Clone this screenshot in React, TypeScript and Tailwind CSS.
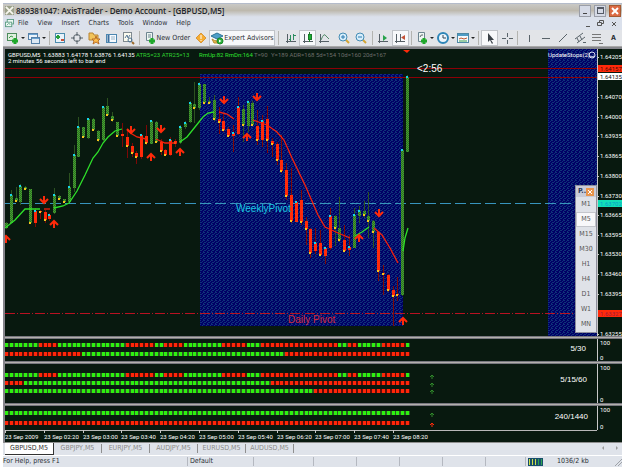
import React from "react";

type Candle = [high: number, low: number, top: number, bottom: number, color: "g" | "r", mark: "c" | "y" | "n"];

const CANDLES: Candle[] = [
  [222, 229, 223, 228, "g", "n"], [190, 223, 195, 223, "g", "c"], [187, 202, 198, 201, "g", "y"],
  [184, 205, 186, 202, "g", "c"], [186, 190, 187, 189, "g", "y"], [189, 224, 189, 223, "g", "y"],
  [208, 227, 211, 223, "r", "c"], [210, 219, 211, 212, "r", "y"], [210, 223, 212, 220, "r", "y"],
  [213, 221, 215, 219, "r", "c"], [188, 214, 195, 213, "g", "c"], [195, 200, 196, 199, "g", "y"],
  [199, 202, 199, 202, "g", "y"], [173, 203, 187, 202, "g", "c"], [145, 192, 155, 188, "g", "c"],
  [117, 157, 127, 157, "g", "c"], [127, 138, 127, 137, "g", "y"], [118, 139, 119, 138, "g", "c"],
  [118, 131, 119, 130, "g", "y"], [130, 142, 131, 140, "g", "y"], [106, 141, 107, 140, "g", "c"],
  [98, 116, 106, 115, "g", "y"], [112, 122, 116, 120, "g", "y"], [122, 137, 122, 136, "g", "y"],
  [123, 147, 134, 136, "r", "n"], [130, 158, 137, 146, "r", "y"], [143, 157, 146, 153, "r", "y"],
  [151, 164, 153, 157, "r", "y"], [134, 159, 135, 157, "r", "c"], [125, 145, 136, 143, "r", "y"],
  [120, 144, 121, 144, "g", "c"], [121, 143, 122, 142, "g", "y"], [139, 155, 142, 151, "r", "y"],
  [149, 156, 150, 155, "r", "y"], [137, 156, 140, 155, "r", "c"], [139, 147, 141, 143, "r", "y"],
  [125, 144, 127, 143, "g", "c"], [121, 129, 123, 127, "g", "c"], [101, 123, 103, 122, "g", "c"],
  [82, 123, 104, 108, "g", "y"], [82, 110, 84, 108, "g", "c"], [84, 104, 84, 103, "g", "y"],
  [97, 104, 101, 103, "g", "y"], [95, 121, 100, 119, "g", "y"], [107, 134, 119, 122, "r", "y"],
  [114, 132, 121, 130, "r", "y"], [127, 137, 129, 136, "r", "y"], [125, 152, 133, 136, "r", "c"],
  [97, 135, 107, 134, "r", "c"], [105, 142, 109, 125, "g", "y"], [100, 132, 102, 126, "g", "c"],
  [101, 126, 103, 125, "g", "y"], [110, 145, 126, 140, "r", "y"], [115, 147, 121, 140, "r", "c"],
  [106, 153, 119, 140, "r", "y"], [138, 157, 141, 144, "r", "y"], [142, 165, 144, 160, "r", "y"],
  [135, 173, 160, 171, "r", "y"], [163, 200, 170, 196, "r", "y"], [168, 223, 195, 221, "r", "y"],
  [200, 222, 202, 222, "r", "c"], [190, 225, 200, 222, "r", "y"], [217, 245, 221, 229, "r", "y"],
  [228, 258, 229, 253, "r", "y"], [228, 254, 243, 251, "r", "c"], [230, 256, 243, 255, "r", "y"],
  [246, 264, 248, 256, "r", "c"], [208, 250, 216, 248, "r", "c"], [215, 246, 216, 228, "g", "y"],
  [197, 242, 228, 240, "g", "y"], [225, 252, 240, 251, "r", "y"], [235, 256, 247, 250, "r", "c"],
  [208, 248, 215, 248, "g", "c"], [206, 223, 211, 216, "g", "c"], [201, 218, 211, 215, "g", "y"],
  [192, 238, 216, 221, "g", "y"], [220, 248, 221, 232, "g", "y"], [231, 281, 232, 271, "r", "y"],
  [265, 295, 273, 274, "r", "y"], [274, 292, 275, 290, "r", "y"], [286, 326, 290, 296, "r", "y"],
  [277, 301, 294, 295, "r", "y"], [149, 296, 150, 295, "g", "c"], [75, 152, 77, 152, "g", "c"],
];

const barX = (i: number) => Math.round(6 + (i * 401) / 83);

const GREEN_MA = [
  "5,228 15,220 25,209 40,209",
  "54,208 63,206 69,203 77,191 85,175 93,158 98,152 103,143 108,137 115,131 122,129",
  "180,142 187,137 195,127 203,117 208,113 214,112",
  "355,236 362,232 369,227",
  "403,251 405,238 408,228",
];
const RED_MA = [
  "44,209 50,209",
  "127,130 132,134 137,137 146,139",
  "156,139 165,143 177,143",
  "219,112 227,114 234,119",
  "253,120 267,125 277,132 284,140 292,158 305,185 318,215 325,227 338,233 350,238",
  "374,228 382,235 390,248 398,263",
];

const ARROWS: [number, number, "up" | "down"][] = [
  [44, 200, "down"], [131, 130, "down"], [161, 129, "down"], [151, 157, "up"], [180, 152, "up"],
  [54, 224, "up"], [6, 239, "up"], [224, 100, "down"], [257, 97, "down"], [247, 137, "up"],
  [379, 213, "down"], [359, 238, "up"], [403, 321, "up"],
];

const PRICES: [string, number][] = [
  ["1.64205", 57], ["1.64070", 97], ["1.64000", 117], ["1.63935", 136], ["1.63865", 156], ["1.63800", 176],
  ["1.63730", 196], ["1.63665", 215], ["1.63595", 235], ["1.63530", 254], ["1.63460", 274], ["1.63395", 294],
  ["1.63255", 334],
];

const SMALL = "font-['Roboto',sans-serif] text-[6px]";
const UI = "font-['DejaVu_Sans_Condensed','DejaVu_Sans',sans-serif]";
const ARIAL = "font-['Liberation_Sans',Arial,sans-serif]";

function Arrow({ x, y, dir }: { x: number; y: number; dir: "up" | "down" }) {
  const d = dir === "up" ? "M0 4V-3M-4 1L0 -3L4 1" : "M0 -4V3M-4 -1L0 3L4 -1";
  return <path d={d} transform={`translate(${x} ${y})`} stroke="#ff2a0a" strokeWidth="2" fill="none" />;
}

function PriceChart() {
  return (
    <svg viewBox="5 49 617 287" className="block w-full" role="img" aria-label="GBPUSD five minute chart">
      <defs>
        <pattern id="session" width="4" height="4" patternUnits="userSpaceOnUse" shapeRendering="crispEdges">
          <rect width="4" height="4" fill="#000066" />
          <path d="M0 0h1v1h-1zM2 1h1v1h-1zM1 2h1v1h-1zM3 3h1v1h-1zM3 0h1v1h-1zM0 2h1v1h-1z" fill="#10337a" />
        </pattern>
        <pattern id="bull" width="2" height="2" patternUnits="userSpaceOnUse" shapeRendering="crispEdges">
          <rect width="2" height="2" fill="#257425" />
          <path d="M0 0h1v1h-1zM1 1h1v1h-1z" fill="#4d9a2e" />
        </pattern>
      </defs>
      <rect x="5" y="49" width="617" height="287" fill="#08190f" />
      <rect x="200" y="74" width="203" height="252" fill="url(#session)" />
      <rect x="548" y="49" width="49" height="287" fill="url(#session)" />
      <path d="M5 68.500H597M5 77.500H597" stroke="#8c0006" />
      <path d="M5 203.500H597" stroke="#3794bd" strokeDasharray="11 4" />
      <path d="M5 313.500H597" stroke="#b81222" strokeDasharray="10 2 1 2" />
      <g shapeRendering="crispEdges">
        {CANDLES.map(([high, low, top, bottom, color, mark], i) => (
          <g key={i}>
            <rect x={barX(i)} y={high} width="1" height={low - high} fill={color === "g" ? "#2c5220" : "#7d0806"} />
            <rect x={barX(i) - 1} y={top} width="3" height={bottom - top} fill={color === "g" ? "url(#bull)" : "#ff2a0a"} />
            {mark !== "n" && (
              <rect x={barX(i) - 1} y={mark === "c" ? top - 1 : bottom - 1} width="2" height="2" fill={mark === "c" ? "#18d6e8" : "#f5c51c"} />
            )}
          </g>
        ))}
      </g>
      {GREEN_MA.map((p) => <polyline key={p} points={p} fill="none" stroke="#2ee02a" strokeWidth="1.300" />)}
      {RED_MA.map((p) => <polyline key={p} points={p} fill="none" stroke="#f5200c" strokeWidth="1.300" />)}
      {ARROWS.map(([x, y, dir]) => <Arrow key={`${x}-${y}`} x={x} y={y} dir={dir} />)}
      <path d="M403 50h7l-3 3z" fill="#ff2a0a" />

      <g className={SMALL}>
        <text x="8" y="57" fill="#ffffff">GBPUSD,M5</text>
        <text x="43" y="57" fill="#ffffff">1.63883 1.64178 1.63876 1.64135</text>
        <text x="136" y="57" fill="#2fd02f">ATR5=23 ATR25=13</text>
        <text x="199" y="57" fill="#2fe02f">RmUp:82</text>
        <text x="225" y="57" fill="#2fe02f">RmDn:164</text>
        <text x="254" y="57" fill="#6e6e6a">T=90</text>
        <text x="271" y="57" fill="#6e6e6a">Y=189 ADR=168 5d=154 10d=160 20d=167</text>
        <text x="8" y="63" fill="#ffffff">2 minutes 56 seconds left to bar end</text>
        <text x="548" y="57" fill="#ffffff">UpdateStops(2)</text>
      </g>
      <circle cx="592" cy="55" r="3" fill="none" stroke="#d8dcf0" />
      <path d="M590 56q2 2 4 0" fill="none" stroke="#d8dcf0" />
      <g className={`${ARIAL} text-[10px]`}>
        <text x="417" y="72" fill="#ffffff">&lt;2:56</text>
        <text x="236" y="212" fill="#19c8e4">WeeklyPivot</text>
        <text x="288" y="323" fill="#d42a3c">Daily Pivot</text>
      </g>

      <rect x="597" y="49" width="1" height="287" fill="#c8c8c8" />
      <g className={SMALL}>
        {PRICES.map(([p, y]) => (
          <g key={p}>
            <rect x="598" y={y} width="1" height="1" fill="#c8c8c8" />
            <text x="600" y={y + 2} fill="#ffffff">{p}</text>
          </g>
        ))}
        <rect x="598" y="65" width="24" height="7" fill="#ff2a0a" />
        <text x="600" y="71" fill="#4a0a08">1.64157</text>
        <rect x="598" y="73" width="24" height="7" fill="#ffffff" />
        <text x="600" y="79" fill="#111111">1.64135</text>
        <rect x="598" y="200" width="24" height="7" fill="#12e0b8" />
        <text x="600" y="206" fill="#0a9cc8">1.63702</text>
        <rect x="598" y="310" width="24" height="7" fill="#ff2a0a" />
        <text x="600" y="316" fill="#a01a3c">1.63327</text>
      </g>
    </svg>
  );
}

type Run = ["g" | "r", number];
const FAST: Run[] = [
  ["g", 7], ["r", 4], ["g", 14], ["r", 6], ["g", 2], ["r", 4], ["g", 8], ["r", 5], ["g", 3],
  ["r", 16], ["g", 2], ["r", 2], ["g", 5], ["r", 5], ["g", 1],
];

function Dots({ runs, y }: { runs: Run[]; y: number }) {
  const colors = runs.flatMap(([c, n]) => Array<"g" | "r">(n).fill(c));
  return (
    <g shapeRendering="crispEdges">
      {colors.map((c, i) => (
        <g key={i}>
          <rect x={barX(i) - 1} y={y} width={i === colors.length - 1 ? 4 : 5} height="4" fill={c === "g" ? "#2c5a22" : "#5c0c08"} />
          <rect x={barX(i) - 1} y={y} width="3" height="4" fill={c === "g" ? "#2df010" : "#ff2608"} />
        </g>
      ))}
    </g>
  );
}

function Pane({ height, label, labelX, labelY, rows, arrows }: {
  height: number; label: string; labelX: number; labelY: number;
  rows: [Run[], number][]; arrows: [number, string][];
}) {
  return (
    <svg viewBox={`5 0 617 ${height}`} className="block w-full" role="img" aria-label={`Trend ${label}`}>
      <rect x="5" width="617" height={height} fill="#08190f" />
      {rows.map(([runs, y]) => <Dots key={y} runs={runs} y={y} />)}
      {arrows.map(([y, color]) => (
        <path key={y} d={`M432 ${y + 2}v-4M430 ${y}l2 -2l2 2`} stroke={color} fill="none" />
      ))}
      <text x={labelX} y={labelY} textAnchor="end" fill="#ffffff" className={`${ARIAL} text-[8px]`}>{label}</text>
      <rect x="597" width="1" height={height} fill="#c8c8c8" />
      <g className={SMALL} fill="#ffffff">
        <text x="600" y="6">100</text>
        <text x="600" y={height - 1}>0</text>
      </g>
    </svg>
  );
}

const TIMES = ["23 Sep 2009", "23 Sep 02:20", "23 Sep 03:00", "23 Sep 03:40", "23 Sep 04:20", "23 Sep 05:00", "23 Sep 05:40", "23 Sep 06:20", "23 Sep 07:00", "23 Sep 07:40", "23 Sep 08:20"];

function TimeAxis() {
  return (
    <svg viewBox="5 0 617 12" className="block w-full" role="img" aria-label="Time axis">
      <path d="M5 .5H597" stroke="#b8b8b8" />
      {TIMES.map((t, i) => {
        const x = 5 + Math.round((i * 388) / 10);
        return (
          <g key={t}>
            <rect x={x} y="0" width="1" height="3" fill="#c8c8c8" />
            <text x={x} y="9" fill="#ffffff" className={SMALL}>{t}</text>
          </g>
        );
      })}
    </svg>
  );
}

function Divider() {
  return <div className="h-[3px] border-y border-[#77777f] bg-[#b2b0ac]" />;
}

function Ico({ children }: { children: React.ReactNode }) {
  return <svg viewBox="0 0 14 14" className="size-[14px] shrink-0" fill="none" stroke="#59636a" aria-hidden="true">{children}</svg>;
}

const plus = <path d="M9 7v6M6 10h6" stroke="#1fa82b" strokeWidth="3" />;
const axes = <path d="M3.500 3v9M2 10.500h10" stroke="#555f66" />;
const glyphs: Record<string, React.ReactNode> = {
  newChart: <><rect x="1.500" y="2.500" width="9" height="7" fill="#dff0df" stroke="#4d8c5c" /><path d="M3 7l2-2 2 1" stroke="#3c9a48" />{plus}</>,
  profiles: <><rect x="1.500" y="2.500" width="9" height="6" fill="#eaf3fa" stroke="#5580a8" /><path d="M2 3.500h8" stroke="#69a1cf" /><rect x="4.500" y="6.500" width="8" height="6" fill="#dce8f4" stroke="#5580a8" /><path d="M5 7.500h7" stroke="#69a1cf" /></>,
  watch: <><rect x="2.500" y="2.500" width="9" height="9" fill="#e8f2fa" stroke="#4b8cae" /><path d="M5 4v4M3 6h4" stroke="#28a03c" strokeWidth="2" /><path d="M8 9h3" stroke="#cc5034" strokeWidth="2" /></>,
  target: <><circle cx="7" cy="7" r="3.500" /><path d="M7 1v4M7 9v4M1 7h4M9 7h4" /></>,
  navigator: <><path d="M2 2h4l1 2h4v5h-9z" fill="#f2c45a" stroke="#b98432" /><path d="M9 5l1 3h3l-2 2 1 3-3-2-3 2 1-3-2-2h3z" fill="#ffbd4a" stroke="#ba702a" /></>,
  terminal: <><rect x="2.500" y="3.500" width="10" height="8" fill="#f7fbff" stroke="#4d87b0" /><path d="M4.500 4v7" stroke="#3d6f9c" strokeWidth="2" /><path d="M7 6h4M7 8h4" stroke="#9bb5c8" /></>,
  tester: <><rect x="2.500" y="1.500" width="8" height="9" fill="#fbfbef" stroke="#808a90" /><path d="M4 7l2-3 1 3 2-3" stroke="#5a7a9a" /><circle cx="9" cy="9" r="2" stroke="#4b7192" /><path d="M11 11l2 2" stroke="#9c6b2c" strokeWidth="2" /></>,
  order: <><path d="M3.500 1.500h6v8h-6z" fill="#eef6f2" stroke="#6d8590" /><path d="M5 4h3M5 6h3" stroke="#6d8590" />{plus}</>,
  warn: <><path d="M7 2l5 5-5 5-5-5z" fill="#f6ad32" stroke="#d9963a" /><path d="M7 4v4M7 9v1" stroke="#fff" /></>,
  advisor: <><path d="M2 8q5 4 10 0l-1 4H4z" fill="#e8b848" stroke="#b48a30" /><path d="M1 5l6-3 6 3-6 3z" fill="#4f9fc8" stroke="#2e7396" /><circle cx="10" cy="10" r="3" fill="#29ae38" stroke="#1c8a2a" /><path d="M9 8.500l2.500 1.500-2.500 1.500z" fill="#fff" stroke="none" /></>,
  bars: <>{axes}<path d="M6.500 4v6M9.500 3v6M5 8.500h1M10 4.500h2" stroke="#2d8c5d" /></>,
  candles: <>{axes}<path d="M8.500 1v10" stroke="#287a30" /><rect x="7.500" y="3.500" width="3" height="5" fill="#1cad31" stroke="#167a28" /></>,
  line: <>{axes}<path d="M4 9q3-8 5-4l3 3" stroke="#548b69" /></>,
  zoomIn: <><path d="M8 8l4 4" stroke="#d3a535" strokeWidth="2" /><circle cx="6" cy="6" r="4" fill="#d7eefb" stroke="#458cb4" /><path d="M4 6h4M6 4v4" stroke="#2d7ab0" /></>,
  zoomOut: <><path d="M8 8l4 4" stroke="#d3a535" strokeWidth="2" /><circle cx="6" cy="6" r="4" fill="#d7eefb" stroke="#458cb4" /><path d="M4 6h4" stroke="#2d7ab0" /></>,
  scroll: <>{axes}<path d="M7 4l4 3-4 3z" fill="#29a34a" stroke="none" /></>,
  shift: <>{axes}<path d="M7.500 3v7" /><path d="M12 4v5L8 6.500z" fill="#c45135" stroke="none" /></>,
  indicators: <><path d="M3.500 1.500h6v9h-6z" fill="#eef6f2" stroke="#6d8590" /><path d="M5 6q1-3 3-2" stroke="#59636a" />{plus}</>,
  periods: <><circle cx="7" cy="7" r="5" fill="#eef7fd" stroke="#2e86b8" strokeWidth="2" /><path d="M7 4v3h3" stroke="#345" /></>,
  templates: <><rect x="1.500" y="2.500" width="11" height="9" fill="#f4faff" stroke="#4f88a4" /><path d="M2 4h10" stroke="#4f9cc4" strokeWidth="2" /><path d="M3 8l2-1 3 1 3-1" stroke="#c0562c" /><path d="M3 10h8" stroke="#3aa04a" /></>,
  cursor: <path d="M5 2v9l2-2 2 4 1-1-2-3h3z" fill="#394047" stroke="none" />,
  cross: <path d="M7.500 2v4M7.500 9v4M2 7.500h4M9 7.500h4" />,
  vline: <path d="M7.500 4v7" />,
  hline: <path d="M3 7.500h8" />,
  trend: <path d="M3 11l8-8" />,
  channel: <path d="M2 8l8-6M4 12l8-6M4 7l2 4M7 5l2 4M10 11.500h3" />,
  fibo: <path d="M2 3.500h9M2 6.500h9M2 9.500h9M9 12.500h4" stroke="#777" />,
};

const Sep = ({ wide = false }: { wide?: boolean }) => (
  <span className={wide ? "flex w-[7px] justify-center" : "flex w-[5px] justify-center"}><span className="h-[14px] w-px bg-[#b4b4b0]" /></span>
);

function Tool({ icon, label, pressed = false, caret = false }: { icon: string; label: string; pressed?: boolean; caret?: boolean }) {
  return (
    <button
      type="button"
      aria-label={label}
      className={
        pressed
          ? "flex h-4 w-[17px] items-center justify-center border border-[#c0c3c8] bg-[#f7f8fa]"
          : caret
            ? "flex h-4 w-[21px] items-center justify-center"
            : "flex h-4 w-[17px] items-center justify-center"
      }
    >
      <Ico>{glyphs[icon]}</Ico>
      {caret && <span className="ml-px border-x-2 border-t-2 border-x-transparent border-t-[#222]" />}
    </button>
  );
}

function Toolbar() {
  return (
    <div role="toolbar" className="flex h-[17px] items-center overflow-hidden border-b border-[#a8a8a8] bg-[#e2e4e8] pl-[2px]">
      <Tool icon="newChart" label="New chart" caret />
      <Tool icon="profiles" label="Profiles" caret />
      <Sep />
      <Tool icon="watch" label="Market watch" />
      <Tool icon="target" label="Data window" />
      <Tool icon="navigator" label="Navigator" />
      <Tool icon="terminal" label="Terminal" />
      <Tool icon="tester" label="Strategy tester" />
      <Sep />
      <button type="button" className="flex h-4 w-[51px] items-center whitespace-nowrap pl-px"><Ico>{glyphs.order}</Ico><span>New Order</span></button>
      <Tool icon="warn" label="MetaEditor" />
      <button type="button" className="flex h-4 w-[66px] items-center overflow-hidden whitespace-nowrap border border-[#c0c3c8] bg-[#f7f8fa]"><Ico>{glyphs.advisor}</Ico><span>Expert Advisors</span></button>
      <Sep wide />
      <Tool icon="bars" label="Bar chart" />
      <Tool icon="candles" label="Candlesticks" pressed />
      <Tool icon="line" label="Line chart" />
      <span className="w-[3px]" />
      <Tool icon="zoomIn" label="Zoom in" />
      <Tool icon="zoomOut" label="Zoom out" />
      <Sep />
      <Tool icon="scroll" label="Auto scroll" />
      <Tool icon="shift" label="Chart shift" pressed />
      <Sep />
      <Tool icon="indicators" label="Indicators" caret />
      <Tool icon="periods" label="Periods" caret />
      <Tool icon="templates" label="Templates" caret />
      <Sep />
      <Tool icon="cursor" label="Cursor" pressed />
      <Tool icon="cross" label="Crosshair" />
      <Sep />
      <Tool icon="vline" label="Vertical line" />
      <Tool icon="hline" label="Horizontal line" />
      <Tool icon="trend" label="Trendline" />
      <Tool icon="channel" label="Channel" />
      <Tool icon="fibo" label="Fibonacci" />
      <button type="button" className="w-[17px] text-center font-bold">A</button>
    </div>
  );
}

const MENUS = ["File", "View", "Insert", "Charts", "Tools", "Window", "Help"];
const PERIODS = ["M1", "M5", "M15", "M30", "H1", "H4", "D1", "W1", "MN"];
const TABS = ["GBPUSD,M5", "GBPJPY,M5", "EURJPY,M5", "AUDJPY,M5", "EURUSD,M5", "AUDUSD,M5"];

export default function App() {
  return (
    <div className="bg-white px-[3px] pb-[2px] pt-[3px]">
      <div className={`${UI} bg-[#dfe3ea] text-[7px] leading-[9px] text-[#2b2f36]`}>
        <header className="flex h-[14px] items-center border-t border-[#b4bccb] bg-linear-to-b from-[#c9c9c6] via-[#bdb9ae] to-[#dce2ee] pl-[2px]">
          <svg viewBox="0 0 10 10" className="size-[9px]" aria-hidden="true">
            <rect width="10" height="10" fill="#9ba18a" />
            <path d="M1 1l8 8M9 1L1 9" stroke="#f6f6ee" strokeWidth="2" />
          </svg>
          <h1 className="ml-[2px] flex-1 whitespace-nowrap font-['Open_Sans',sans-serif] text-[8px] font-semibold leading-[12px] text-[#20242c]">
            889381047: AxisTrader - Demo Account - [GBPUSD,M5]
          </h1>
          <div className="flex gap-[3px] pr-px">
            <button type="button" aria-label="Minimize" className="flex size-3 items-end justify-center border border-[#9a9ea8] bg-[#d5dae6] pb-[2px]"><span className="h-px w-1 bg-[#444]" /></button>
            <button type="button" aria-label="Maximize" className="flex size-3 items-center justify-center border border-[#9a9ea8] bg-[#d5dae6]"><span className="size-[7px] border border-t-2 border-[#555b66]" /></button>
            <button type="button" aria-label="Close" className="flex size-3 items-center justify-center border border-[#a45a34] bg-[#dc6a44]">
              <svg viewBox="0 0 8 8" className="size-2" stroke="#fff" strokeWidth="2"><path d="M1 1l6 6M7 1L1 7" /></svg>
            </button>
          </div>
        </header>

        <nav className="flex h-[13px] items-center bg-[#dbe1ec] pl-[2px]">
          <svg viewBox="0 0 10 10" className="size-[9px]" fill="#eefaf4" stroke="#5b9c84" aria-hidden="true">
            <rect x="2.500" y=".5" width="7" height="5" /><rect x=".5" y="3.500" width="7" height="5" /><path d="M2 7l2-2 2 1" />
          </svg>
          <ul className="ml-1 flex flex-1 gap-[9px]">
            {MENUS.map((m) => <li key={m}><button type="button">{m}</button></li>)}
          </ul>
          <div className="flex w-9 items-center justify-between pr-[5px]">
            <button type="button" aria-label="Minimize chart" className="flex h-2 items-end pb-px"><span className="h-px w-1 bg-[#555]" /></button>
            <button type="button" aria-label="Restore chart"><svg viewBox="0 0 7 7" className="block size-[7px]" fill="none" stroke="#555"><path d="M2.500 2V.5h4v3H5M.5 2.500h4v3h-4z" /></svg></button>
            <button type="button" aria-label="Close chart"><svg viewBox="0 0 6 6" className="block size-[6px]" stroke="#555"><path d="M1 1l4 4M5 1L1 5" /></svg></button>
          </div>
        </nav>

        <Toolbar />

        <main className="relative border-l-2 border-t-2 border-[#85858b] bg-[#08190f]">
          <PriceChart />
          <Divider />
          <Pane height={22} label="5/30" labelX={586} labelY={12} rows={[[FAST, 4], [[["r", 16], ["g", 42], ["r", 26]], 13]]} arrows={[]} />
          <Divider />
          <Pane
            height={39} label="5/15/60" labelX={587} labelY={18}
            rows={[[FAST, 9], [[["r", 4], ["g", 51], ["r", 29]], 17], [[["g", 64], ["r", 20]], 25]]}
            arrows={[[13, "#2f8a2a"], [21, "#2f8a2a"], [28, "#2f8a2a"]]}
          />
          <Divider />
          <Pane
            height={24} label="240/1440" labelX={588} labelY={13}
            rows={[[[["g", 84]], 5], [[["r", 84]], 15]]}
            arrows={[[9, "#2f8a2a"], [19, "#ff2a0a"]]}
          />
          <TimeAxis />

          <aside className="absolute right-[25px] top-[136px] w-[22px] border border-[#8d8f9c] bg-[#dfe2e8] text-[#555]">
            <div className="flex h-[11px] items-center justify-between bg-[#c9ccd8] px-[2px]">
              <b className="text-[#2a3a5c]">P..</b>
              <button type="button" aria-label="Close periods" className="flex size-2 items-center justify-center bg-[#e8954c]">
                <svg viewBox="0 0 6 6" className="size-[6px]" stroke="#fff"><path d="M1 1l4 4M5 1L1 5" /></svg>
              </button>
            </div>
            {PERIODS.map((p) => (
              <button key={p} type="button" className={p === "M5" ? "block h-[15px] w-full border border-[#c4c6cc] bg-[#f8f8fa]" : "block h-[15px] w-full"}>{p}</button>
            ))}
          </aside>
        </main>

        <div role="tablist" className="flex h-[13px] items-start border-t border-[#8f8f8f] text-[#8b8b88]">
          {TABS.map((t, i) => (
            <button
              key={t}
              type="button"
              role="tab"
              aria-selected={i === 0}
              className={
                i === 0
                  ? "ml-[2px] h-3 w-[49px] border-b border-r border-[#333] bg-white text-[#333]"
                  : "my-px h-[9px] w-12 border-r border-[#8f8f8f] leading-[9px]"
              }
            >
              {t}
            </button>
          ))}
          <span className="ml-auto mr-1 flex w-4 justify-between pt-[3px]">
            <span className="border-y-2 border-r-2 border-y-transparent border-r-[#9a9a9a]" />
            <span className="border-y-2 border-l-2 border-y-transparent border-l-[#9a9a9a]" />
          </span>
        </div>

        <footer className="flex h-[12px] items-center border-t border-white">
          <span className="flex-1">For Help, press F1</span>
          <span className="w-[66px] border-l border-[#b4b8c0] pl-[2px]">Default</span>
          <span className="h-[9px] w-[60px] border-l border-[#b4b8c0]" />
          <span className="h-[9px] w-[43px] border-l border-[#b4b8c0]" />
          <span className="h-[9px] w-[43px] border-l border-[#b4b8c0]" />
          <span className="h-[9px] w-[43px] border-l border-[#b4b8c0]" />
          <span className="h-[9px] w-[43px] border-l border-[#b4b8c0]" />
          <span className="h-[9px] w-[40px] border-l border-[#b4b8c0]" />
          <span className="flex w-[97px] items-center border-l border-[#b4b8c0] pl-[2px]">
            <svg viewBox="0 0 15 8" className="h-2 w-[15px]" aria-hidden="true">
              <rect width="15" height="8" fill="#174f6b" />
              <path d="M1.500 1v6M4.500 1v6M7.500 1v6" stroke="#cfe04a" />
              <path d="M10.500 1v6M13.500 1v6" stroke="#2ea452" />
            </svg>
            <span className="ml-[14px]">1036/2 kb</span>
            <svg viewBox="0 0 8 8" className="ml-auto size-2" stroke="#9ea2a8" aria-hidden="true"><path d="M1 8l7-7M4 8l4-4" /></svg>
          </span>
        </footer>
      </div>
    </div>
  );
}
